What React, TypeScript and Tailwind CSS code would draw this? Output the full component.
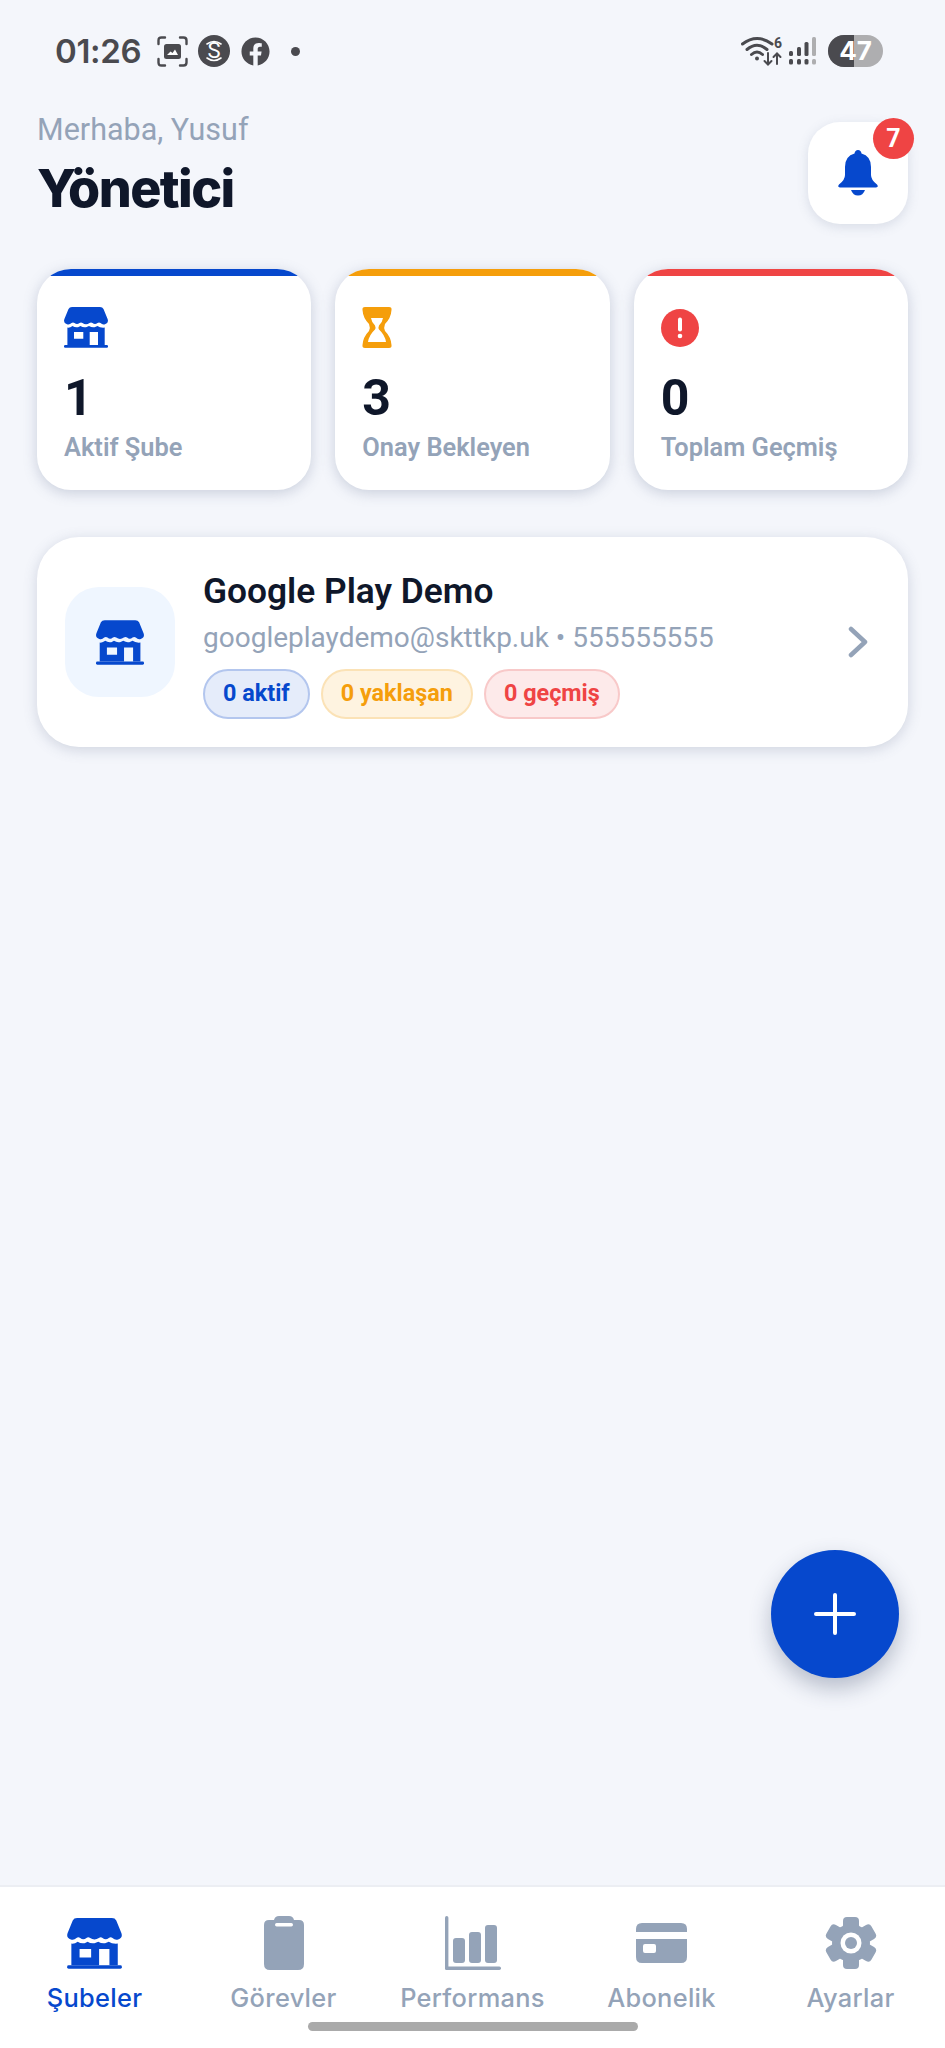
import { FaFacebook } from "react-icons/fa";

function Store({ className }: { className: string }) {
  return (
    <svg viewBox="0 0 44 41" className={className} fill="currentColor">
      <path d="M8 0H36Q38.5 0 39.5 2L43.6 12Q45 16 41 17.2Q38.5 18 36.5 16Q35 15 33.5 16Q31 18.2 28.5 16Q27 15 25.5 16Q22 18.4 18.5 16Q17 15 15.5 16Q13 18.2 10.5 16Q9 15 7.5 16Q5.5 18 3 17.2Q-1 16 0.4 12L4.5 2Q5.5 0 8 0Z" />
      <path
        fillRule="evenodd"
        d="M3.4 20.6Q6 21 8.5 19Q11 20.8 14 20.2L16.5 19Q19 20.8 22 20.2L25 19Q28 20.8 30.5 20.2L33.5 19Q36 21 40.7 20.6V38H34V25H25.7V38H3.4ZM10 25V31.7H19.3V25Z"
      />
      <rect x="0" y="38" width="44" height="2.8" rx="1.2" />
    </svg>
  );
}

function Hourglass() {
  return (
    <svg viewBox="0 0 30 41" className="h-[41px] w-[30px] text-[#f59e0b]" fill="currentColor">
      <path
        fillRule="evenodd"
        d="M3 0H27Q30 0 29.5 3Q29 11 23 17Q21.5 20.5 23 24Q29 30 29.5 38Q30 41 27 41H3Q0 41 0.5 38Q1 30 7 24Q8.5 20.5 7 17Q1 11 0.5 3Q0 0 3 0ZM9 11H21Q20.5 15 17 18.5Q16 20.5 17 22.5Q23 28 24 35H6Q7 28 13 22.5Q14 20.5 13 18.5Q9.5 15 9 11Z"
      />
    </svg>
  );
}

function AlertDot() {
  return (
    <svg viewBox="0 0 38 38" className="h-[38px] w-[38px]">
      <circle cx="19" cy="19" r="19" fill="#ef4444" />
      <rect x="17" y="8.5" width="4" height="14" rx="2" fill="white" />
      <circle cx="19" cy="27" r="2.3" fill="white" />
    </svg>
  );
}

function StatCard({ bar, icon, value, label }: { bar: string; icon: React.ReactNode; value: string; label: string }) {
  return (
    <div className="h-[221px] overflow-hidden rounded-[34px] bg-white shadow-[0_3px_14px_rgba(90,105,140,0.28)]">
      <div className={`h-[7px] ${bar}`} />
      <div className="px-[27px] pt-[31px]">
        <div className="flex h-[41px] items-center">{icon}</div>
        <p className="mt-[25px] text-[50px] leading-[50px] font-bold text-[#0f172a]">{value}</p>
        <p className="mt-[8px] text-[25.4px] leading-[32px] font-semibold text-[#94a3b8]">{label}</p>
      </div>
    </div>
  );
}

function Chip({ className, children }: { className: string; children: string }) {
  return (
    <span className={`flex h-[50px] items-center rounded-[25px] border-2 px-[18px] text-[23.4px] font-bold ${className}`}>
      {children}
    </span>
  );
}

function Gear() {
  return (
    <svg viewBox="0 0 52 52" className="h-[52px] w-[52px]" fill="#94a3b8">
      <circle cx="26" cy="26" r="19" />
      {[0, 60, 120].map((deg) => (
        <rect key={deg} x="18" y="0" width="16" height="52" rx="4" transform={`rotate(${deg} 26 26)`} />
      ))}
      <circle cx="26" cy="26" r="10.5" fill="white" />
      <circle cx="26" cy="26" r="6" />
    </svg>
  );
}

function Clipboard() {
  return (
    <svg viewBox="0 0 40 54" className="h-[54px] w-[40px]" fill="#94a3b8">
      <path d="M5 4H10Q11 0 15 0H25Q29 0 30 4H35Q40 4 40 9V48Q40 54 34 54H6Q0 54 0 48V9Q0 4 5 4Z" />
      <rect x="11" y="7" width="18" height="3.5" rx="1.7" fill="white" />
    </svg>
  );
}

function Chart() {
  return (
    <svg viewBox="0 0 56 54" className="h-[54px] w-[56px]" fill="#94a3b8">
      <rect x="0" y="0" width="3.4" height="54" rx="1.7" />
      <rect x="0" y="50.6" width="56" height="3.4" rx="1.7" />
      <rect x="8" y="22" width="12" height="25" rx="3" />
      <rect x="24" y="16" width="12" height="31" rx="3" />
      <rect x="40" y="9" width="12" height="38" rx="3" />
    </svg>
  );
}

function Card() {
  return (
    <svg viewBox="0 0 51 40" className="h-[40px] w-[51px]" fill="#94a3b8">
      <path d="M6 0H45Q51 0 51 6V9H0V6Q0 0 6 0Z" />
      <path
        fillRule="evenodd"
        d="M0 16H51V34Q51 40 45 40H6Q0 40 0 34ZM9 21Q7 21 7 23V28Q7 30 9 30H18Q20 30 20 28V23Q20 21 18 21Z"
      />
    </svg>
  );
}

function StatusBar() {
  return (
    <div className="flex items-center justify-between pt-[35px] pr-[62px] pl-[55px]">
      <div className="flex items-center text-[#4a4a4f]">
        <span className="w-[102px] font-['Inter',sans-serif] text-[33px] leading-[32px] font-semibold tracking-[-0.3px]">01:26</span>
        <svg viewBox="0 0 31 31" className="h-[31px] w-[31px]" fill="none" stroke="currentColor" strokeWidth="2.4" strokeLinecap="round">
          <path d="M1.5 8V4.5Q1.5 1.5 4.5 1.5H8M23 1.5H26.5Q29.5 1.5 29.5 4.5V8M29.5 23V26.5Q29.5 29.5 26.5 29.5H23M8 29.5H4.5Q1.5 29.5 1.5 26.5V23" />
          <rect x="7" y="8" width="17" height="15" rx="2.5" fill="currentColor" stroke="none" />
          <path d="M10 19L13.5 15.5L15.5 17L18 13.5L21 19Z" fill="white" stroke="none" />
        </svg>
        <span className="relative ml-[10px] flex h-[32px] w-[32px] items-center justify-center rounded-full bg-[#4a4a4f] font-['Roboto',sans-serif] text-[22px] leading-none font-normal text-white">
          S
          <svg viewBox="0 0 32 32" className="absolute inset-0" fill="none" stroke="white" strokeWidth="1.6" strokeLinecap="round">
            <path d="M9 9Q16 4 23 9M9 23Q16 28 23 23" />
          </svg>
        </span>
        <FaFacebook className="ml-[11px] h-[29px] w-[29px]" />
        <span className="ml-[21px] h-[9px] w-[9px] rounded-full bg-[#4a4a4f]" />
      </div>
      <div className="flex items-center text-[#4a4a4f]">
        <div className="relative h-[30px] w-[42px]">
          <svg viewBox="0 0 42 30" className="h-[30px] w-[42px]" fill="none" stroke="currentColor" strokeLinecap="round">
            <path d="M1.5 8Q16 -3 31 8" strokeWidth="3" />
            <path d="M6 13.5Q16 5 26 13.5" strokeWidth="3" />
            <path d="M10.5 18.5Q16 13.5 21.5 18.5" strokeWidth="3" />
            <circle cx="16" cy="22.5" r="2" fill="currentColor" stroke="none" />
            <path d="M27 17V28M23.5 25L27 28.5L30.5 25M36 28V18M32.5 21L36 17.5L39.5 21" strokeWidth="2" />
          </svg>
          <span className="absolute top-0 right-[1px] text-[14px] leading-[14px] font-bold">6</span>
        </div>
        <svg viewBox="0 0 27 28" className="ml-[6px] h-[28px] w-[27px]" fill="currentColor">
          <rect x="0" y="14" width="4" height="5" rx="1.5" />
          <rect x="0" y="22" width="4" height="5.5" rx="1.5" />
          <rect x="8" y="10" width="4" height="9" rx="1.5" />
          <rect x="8" y="22" width="4" height="5.5" rx="1.5" />
          <rect x="15.5" y="5" width="4" height="14" rx="1.5" />
          <rect x="15.5" y="22" width="4" height="5.5" rx="1.5" />
          <rect x="23" y="0" width="4" height="19" rx="1.5" fill="#aeaeb0" />
          <rect x="23" y="22" width="4" height="5.5" rx="1.5" fill="#aeaeb0" />
        </svg>
        <div className="relative ml-[12px] flex h-[32px] w-[55px] items-center justify-center rounded-full bg-[#aeaeb0]">
          <div className="absolute inset-y-0 left-0 w-[26px] rounded-l-full bg-[#4a4a4f]" />
          <span className="relative font-['Inter',sans-serif] text-[26px] leading-none font-bold text-white">47</span>
        </div>
      </div>
    </div>
  );
}

function NavItem({ icon, label, active }: { icon: React.ReactNode; label: string; active?: boolean }) {
  return (
    <div className="flex flex-col items-center">
      <div className="flex h-[54px] items-center justify-center">{icon}</div>
      <span className={`mt-[12px] text-[25.4px] leading-[32px] font-medium tracking-[0.3px] ${active ? "text-[#0648cd]" : "text-[#94a3b8]"}`}>
        {label}
      </span>
    </div>
  );
}

export default function App() {
  return (
    <div className="relative flex h-[2048px] flex-col bg-[#f4f6fb] font-['Roboto',sans-serif]">
      <StatusBar />

      <header className="mt-[45px] flex justify-between px-[37px]">
        <div>
          <p className="text-[30.5px] leading-[36px] text-[#94a3b8]">Merhaba, Yusuf</p>
          <h1 className="mt-[10px] font-['Inter',sans-serif] text-[52px] leading-[62px] font-extrabold tracking-[-1.6px] text-[#0f172a]">Yönetici</h1>
        </div>
        <button className="relative mt-[10px] flex h-[102px] w-[100px] items-center justify-center rounded-[32px] bg-white shadow-[0_3px_12px_rgba(90,105,140,0.18)]">
          <svg viewBox="0 0 40 46" className="h-[46px] w-[40px] text-[#0648cd]" fill="currentColor">
            <path d="M20 0Q23 0 23.5 3.5Q33 6 33 17V25Q33 30 39 34.5Q41 37 38 37.5H2Q-1 37 1 34.5Q7 30 7 25V17Q7 6 16.5 3.5Q17 0 20 0Z" />
            <path d="M13 40H27Q25 45.5 20 45.5Q15 45.5 13 40Z" />
          </svg>
          <span className="absolute -top-[4px] -right-[6px] flex h-[41px] w-[41px] items-center justify-center rounded-full bg-[#ef4444] text-[25px] leading-none font-bold text-white">
            7
          </span>
        </button>
      </header>

      <section className="mt-[45px] grid grid-cols-3 gap-[24px] px-[37px]">
        <StatCard bar="bg-[#0648cd]" icon={<Store className="h-[41px] w-[44px] text-[#0648cd]" />} value="1" label="Aktif Şube" />
        <StatCard bar="bg-[#f59e0b]" icon={<Hourglass />} value="3" label="Onay Bekleyen" />
        <StatCard bar="bg-[#ef4444]" icon={<AlertDot />} value="0" label="Toplam Geçmiş" />
      </section>

      <article className="mx-[37px] mt-[47px] flex h-[210px] items-center rounded-[42px] bg-white pr-[40px] pl-[28px] shadow-[0_3px_14px_rgba(90,105,140,0.24)]">
        <div className="flex h-[110px] w-[110px] shrink-0 items-center justify-center rounded-[34px] bg-[#eff6ff]">
          <Store className="h-[45px] w-[48px] text-[#0648cd]" />
        </div>
        <div className="ml-[28px] flex-1 pt-[6px]">
          <p className="text-[35.3px] leading-[40px] font-semibold text-[#0f172a]">Google Play Demo</p>
          <p className="mt-[9px] text-[28px] leading-[36px] text-[#94a3b8]">googleplaydemo@skttkp.uk • 555555555</p>
          <div className="mt-[13px] flex gap-[11px]">
            <Chip className="border-[#b3c6ee] bg-[#e5ecfa] text-[#0648cd]">0 aktif</Chip>
            <Chip className="border-[#fbe2b6] bg-[#fef3e0] text-[#f59e0b]">0 yaklaşan</Chip>
            <Chip className="border-[#f8c9c9] bg-[#fdeaea] text-[#ef4444]">0 geçmiş</Chip>
          </div>
        </div>
        <svg viewBox="0 0 20 32" className="h-[32px] w-[20px]" fill="none" stroke="#94a3b8" strokeWidth="4.5" strokeLinecap="round" strokeLinejoin="round">
          <path d="M3 3L17 16L3 29" />
        </svg>
      </article>

      <div className="flex-1" />

      <button className="absolute right-[46px] bottom-[370px] flex h-[128px] w-[128px] items-center justify-center rounded-full bg-[#0648cd] shadow-[0_10px_22px_rgba(50,65,100,0.32)]">
        <svg viewBox="0 0 42 42" className="h-[42px] w-[42px]" fill="none" stroke="white" strokeWidth="4" strokeLinecap="round">
          <path d="M21 2V40M2 21H40" />
        </svg>
      </button>

      <nav className="flex h-[163px] flex-col items-center border-t-2 border-[#eceef3] bg-white pt-[29px] font-['Inter',sans-serif]">
        <div className="grid w-full grid-cols-5">
          <NavItem active label="Şubeler" icon={<Store className="h-[51px] w-[55px] text-[#0648cd]" />} />
          <NavItem label="Görevler" icon={<Clipboard />} />
          <NavItem label="Performans" icon={<Chart />} />
          <NavItem label="Abonelik" icon={<Card />} />
          <NavItem label="Ayarlar" icon={<Gear />} />
        </div>
        <div className="mt-[8px] h-[9px] w-[330px] rounded-full bg-[#aaaaaa]" />
      </nav>
    </div>
  );
}
